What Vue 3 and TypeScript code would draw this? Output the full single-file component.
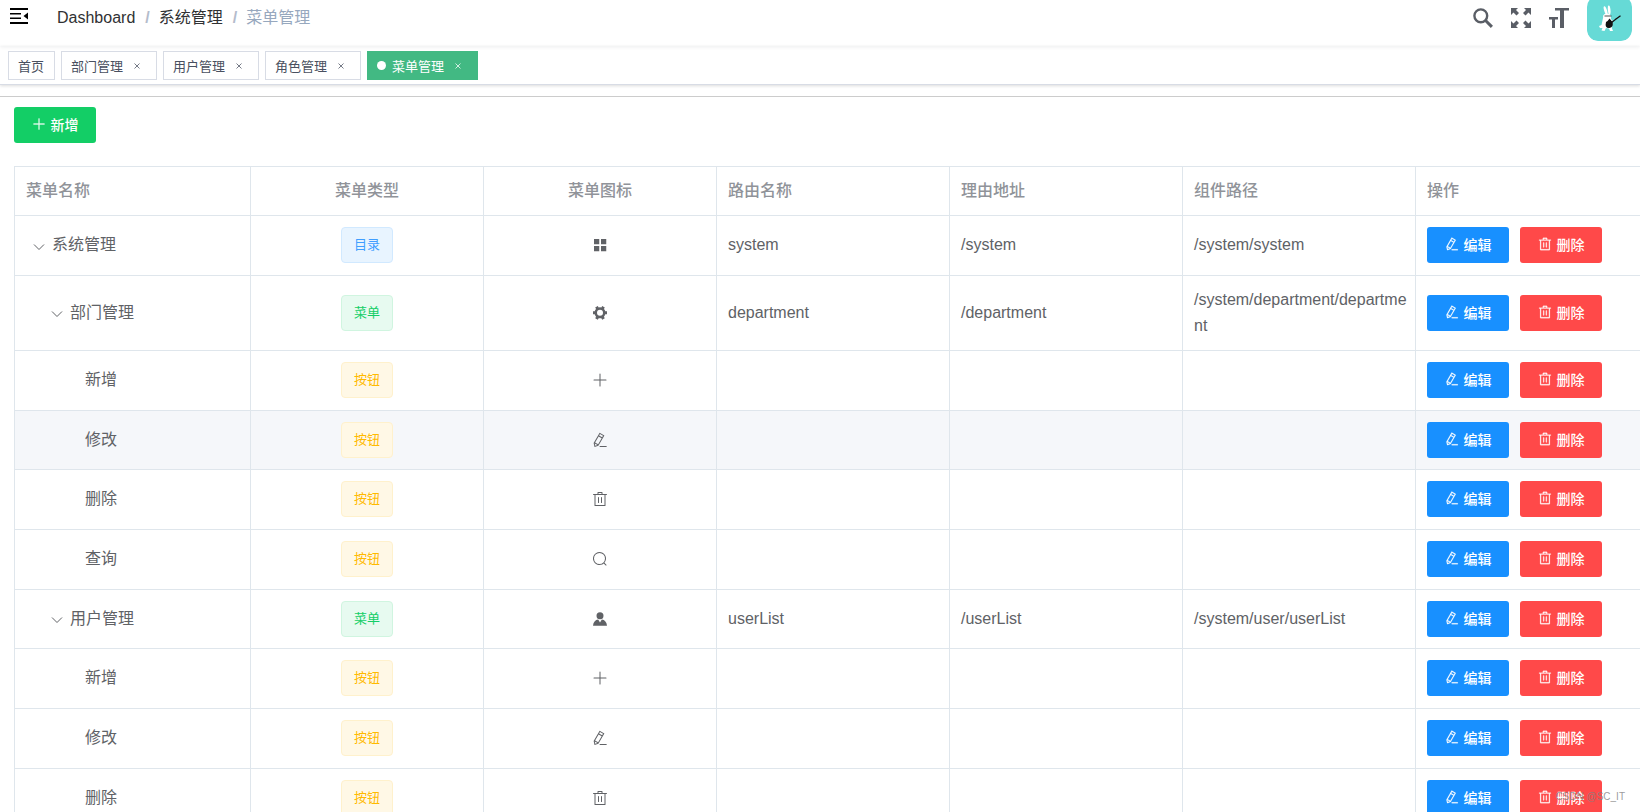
<script setup lang="ts">
import { ref } from 'vue'

type Kind = 'dir' | 'menu' | 'button'
type IconName = 'grid' | 'gear' | 'plus' | 'edit' | 'trash' | 'search' | 'user'

interface MenuRow {
  id: number
  name: string
  level: number
  kind: Kind
  icon: IconName
  route?: string
  url?: string
  path?: string
}

const kindLabel: Record<Kind, string> = { dir: '目录', menu: '菜单', button: '按钮' }

const icons: Record<IconName, string> = {
  grid: 'M128 128h336v336H128zM576 128h336v336H576zM128 576h336v336H128zM576 576h336v336H576z',
  gear: 'M764.416 254.72a351.68 351.68 0 0 1 86.336 149.184H960v192.064H850.752a351.68 351.68 0 0 1-86.336 149.312l54.72 94.72-166.272 96-54.592-94.72a352.64 352.64 0 0 1-172.48 0L371.136 936l-166.272-96 54.72-94.72a351.68 351.68 0 0 1-86.336-149.312H64v-192h109.248a351.68 351.68 0 0 1 86.336-149.312L204.8 160l166.208-96h.192l54.656 94.592a352.64 352.64 0 0 1 172.48 0L652.8 64h.128L819.2 160l-54.72 94.72zM704 499.968a192 192 0 1 0-384 0 192 192 0 0 0 384 0z',
  plus: 'M480 480V128a32 32 0 0 1 64 0v352h352a32 32 0 1 1 0 64H544v352a32 32 0 1 1-64 0V544H128a32 32 0 0 1 0-64h352z',
  edit: 'm199.04 672.64 193.984 112 224-387.968-193.92-112-224 388.032zm-23.872 60.16 32.896 148.288 144.896-45.696L175.168 732.8zM455.04 229.248l193.92 112 56.704-98.112-193.984-112-56.64 98.112zM104.32 708.8l384-665.024 304.768 175.936L409.152 884.8h.064l-248.448 78.336L104.32 708.8zm384 254.272v-64h448v64h-448z',
  trash: 'M160 256H96a32 32 0 0 1 0-64h256V95.936a32 32 0 0 1 32-32h256a32 32 0 0 1 32 32V192h256a32 32 0 1 1 0 64h-64v672a32 32 0 0 1-32 32H192a32 32 0 0 1-32-32V256zm448-64v-64H416v64h192zM224 896h576V256H224v640zm192-128a32 32 0 0 1-32-32V416a32 32 0 0 1 64 0v320a32 32 0 0 1-32 32zm192 0a32 32 0 0 1-32-32V416a32 32 0 0 1 64 0v320a32 32 0 0 1-32 32z',
  search: 'm795.904 750.72 124.992 124.928a32 32 0 0 1-45.248 45.248L750.656 795.904a416 416 0 1 1 45.248-45.248zM480 832a352 352 0 1 0 0-704 352 352 0 0 0 0 704z',
  user: 'M288 304a224 224 0 1 0 448 0 224 224 0 1 0-448 0zM628 540c190 20 316 166 332 404H64c16-238 142-384 332-404l116 190z',
}

const tabs = ref([
  { title: '首页', closable: false },
  { title: '部门管理', closable: true },
  { title: '用户管理', closable: true },
  { title: '角色管理', closable: true },
  { title: '菜单管理', closable: true },
])
const activeTab = ref('菜单管理')
const highlighted = ref(4)

const rows = ref<MenuRow[]>([
  { id: 1, name: '系统管理', level: 0, kind: 'dir', icon: 'grid', route: 'system', url: '/system', path: '/system/system' },
  { id: 2, name: '部门管理', level: 1, kind: 'menu', icon: 'gear', route: 'department', url: '/department', path: '/system/department/department' },
  { id: 3, name: '新增', level: 2, kind: 'button', icon: 'plus' },
  { id: 4, name: '修改', level: 2, kind: 'button', icon: 'edit' },
  { id: 5, name: '删除', level: 2, kind: 'button', icon: 'trash' },
  { id: 6, name: '查询', level: 2, kind: 'button', icon: 'search' },
  { id: 7, name: '用户管理', level: 1, kind: 'menu', icon: 'user', route: 'userList', url: '/userList', path: '/system/user/userList' },
  { id: 8, name: '新增', level: 2, kind: 'button', icon: 'plus' },
  { id: 9, name: '修改', level: 2, kind: 'button', icon: 'edit' },
  { id: 10, name: '删除', level: 2, kind: 'button', icon: 'trash' },
])
</script>

<template>
  <div class="page">
    <header class="navbar">
      <button class="bare" type="button" aria-label="收起菜单">
        <svg class="fold" viewBox="0 0 18 16">
          <path d="M0 0h18v2H0zM0 5h11v1.500H0zM0 9.500h11V11H0zM0 14h18v2H0zM18 4.500v7L13.500 8z" />
        </svg>
      </button>
      <nav class="crumbs" aria-label="面包屑">
        <a href="#">Dashboard</a>
        <span class="slash">/</span>
        <a href="#">系统管理</a>
        <span class="slash">/</span>
        <span class="here">菜单管理</span>
      </nav>
      <div class="tools">
        <button class="bare" type="button" aria-label="搜索">
          <svg class="tool" viewBox="0 0 20 20">
            <circle cx="7.800" cy="7.800" r="6.400" fill="none" stroke="currentColor" stroke-width="2.400" />
            <path d="M12.300 12.300l6.600 6.600" stroke="currentColor" stroke-width="3" />
          </svg>
        </button>
        <button class="bare" type="button" aria-label="全屏">
          <svg class="tool" viewBox="0 0 20 20">
            <path d="M0 0h7L5 2l3 3-2.500 2.500-3-3L0 7zM20 0h-7l2 2-3 3 2.500 2.500 3-3L20 7zM0 20h7l-2-2 3-3-2.500-2.500-3 3L0 13zM20 20h-7l2-2-3-3 2.500-2.500 3 3L20 13z" />
          </svg>
        </button>
        <button class="bare" type="button" aria-label="字号">
          <svg class="tool" viewBox="0 0 20 20">
            <path d="M6 0h14v2.500h-5V20h-4V2.500H6zM0 9h9v2.500H6V20H3v-8.500H0z" />
          </svg>
        </button>
        <button class="bare avatar" type="button" aria-label="用户">
          <svg viewBox="0 0 45 45">
            <rect width="45" height="45" fill="#66dad6" />
            <g fill="#fff">
              <ellipse cx="18.600" cy="14.500" rx="1.400" ry="4.500" transform="rotate(-18 18.600 14.500)" />
              <ellipse cx="22.200" cy="14" rx="1.300" ry="4.500" transform="rotate(-6 22.200 14)" />
              <ellipse cx="20" cy="21" rx="4" ry="3.600" />
              <path d="M16 22l-1.500 7-2.500 1 1 2 2.500 0-1 2.500 3 .500 1.500-3 3 .500 1 2.500h3l-1-2.500 .500-8-3-3z" />
            </g>
            <path d="M17.500 20h7" stroke="#222" stroke-width=".8" />
            <path d="M19 26q2-1 3.500-3.500l3 3.500q1.500 5-3 6-5 .500-3.500-6z" fill="#111" />
            <path d="M24 27l5-4M28 23.800l5.500-4" stroke="#111" stroke-width="1.300" />
          </svg>
        </button>
      </div>
    </header>

    <nav class="tabs" aria-label="标签页">
      <div v-for="tab in tabs" :key="tab.title" class="tab" :class="{ active: tab.title === activeTab }">
        <a href="#" @click.prevent="activeTab = tab.title">{{ tab.title }}</a>
        <button v-if="tab.closable" class="bare close" type="button" :aria-label="'关闭' + tab.title">
          <svg viewBox="0 0 6 6"><path d="M.500 .500l5 5M5.500 .500l-5 5" stroke="currentColor" /></svg>
        </button>
      </div>
    </nav>

    <main class="content">
      <button class="btn add" type="button">
        <svg class="glyph" viewBox="0 0 1024 1024"><path :d="icons.plus" /></svg>
        <span>新增</span>
      </button>

      <table class="grid">
        <colgroup>
          <col class="name-col" />
          <col span="6" />
        </colgroup>
        <thead>
          <tr>
            <th>菜单名称</th>
            <th class="center">菜单类型</th>
            <th class="center">菜单图标</th>
            <th>路由名称</th>
            <th>理由地址</th>
            <th>组件路径</th>
            <th>操作</th>
          </tr>
        </thead>
        <tbody>
          <tr v-for="row in rows" :key="row.id" :class="{ hover: row.id === highlighted }">
            <td>
              <div class="tree" :class="'level-' + row.level">
                <button v-if="row.level < 2" class="bare expand" type="button" :aria-label="'折叠' + row.name">
                  <svg viewBox="0 0 12 12"><path d="M1 3.500l5 5 5-5" fill="none" stroke="currentColor" /></svg>
                </button>
                <span>{{ row.name }}</span>
              </div>
            </td>
            <td class="center"><span class="tag" :class="row.kind">{{ kindLabel[row.kind] }}</span></td>
            <td class="center">
              <svg class="row-icon" viewBox="0 0 1024 1024"><path :d="icons[row.icon]" fill-rule="evenodd" /></svg>
            </td>
            <td>{{ row.route }}</td>
            <td>{{ row.url }}</td>
            <td>{{ row.path }}</td>
            <td>
              <div class="actions">
                <button class="btn edit" type="button">
                  <svg class="glyph" viewBox="0 0 1024 1024"><path :d="icons.edit" fill-rule="evenodd" /></svg>
                  <span>编辑</span>
                </button>
                <button class="btn remove" type="button">
                  <svg class="glyph" viewBox="0 0 1024 1024"><path :d="icons.trash" fill-rule="evenodd" /></svg>
                  <span>删除</span>
                </button>
              </div>
            </td>
          </tr>
        </tbody>
      </table>
    </main>
    <div class="credit">CSDN @SC_IT</div>
  </div>
</template>

<style>
html,
body {
  height: 100%;
  overflow: hidden;
}
#app {
  height: 100%;
}
</style>

<style scoped>
.page {
  position: relative;
  height: 100%;
  overflow: hidden;
  background: #fff;
  color: #606266;
  font-family: "Liberation Sans", "Noto Sans CJK SC", sans-serif;
  font-size: 16px;
}
.bare {
  display: flex;
  align-items: center;
  justify-content: center;
  padding: 0;
  border: 0;
  background: none;
  color: inherit;
  font: inherit;
  cursor: pointer;
}
svg {
  display: block;
  fill: currentColor;
}
.navbar {
  display: flex;
  align-items: flex-start;
  height: 46px;
  padding: 0 8px 0 10px;
  box-sizing: border-box;
  box-shadow: 0 1px 4px rgba(0, 21, 41, 0.08);
}
.fold {
  width: 18px;
  height: 16px;
  margin-top: 8px;
  color: #000;
}
.crumbs {
  display: flex;
  margin-left: 29px;
  line-height: 36px;
}
.crumbs a {
  color: #303133;
  text-decoration: none;
}
.slash {
  margin: 0 9px 0 10px;
  color: #b4bccc;
  font-weight: 700;
}
.here {
  color: #97a8be;
}
.tools {
  display: flex;
  align-items: flex-start;
  gap: 18px;
  margin-left: auto;
  color: #5a5e66;
}
.tool {
  width: 20px;
  height: 20px;
  margin-top: 8px;
}
.avatar {
  width: 45px;
  height: 41px;
  overflow: hidden;
  align-items: flex-end;
  border-radius: 0 0 11px 11px;
}
.avatar svg {
  flex: none;
  width: 45px;
  height: 45px;
  border-radius: 11px;
}
.tabs {
  display: flex;
  gap: 6px;
  height: 39px;
  padding: 5px 8px 0;
  box-sizing: border-box;
  border-bottom: 1px solid #d8dce5;
  box-shadow: 0 1px 3px rgba(0, 0, 0, 0.14);
}
.tab {
  display: flex;
  align-items: center;
  height: 29px;
  padding: 0 10px 0 9px;
  box-sizing: border-box;
  border: 1px solid #d8dce5;
  color: #495060;
  font-size: 13px;
}
.tab a {
  color: inherit;
  text-decoration: none;
}
.tab.active {
  border-color: #42b983;
  background: #42b983;
  color: #fff;
}
.tab.active::before {
  width: 9px;
  height: 9px;
  margin-right: 6px;
  border-radius: 50%;
  background: #fff;
  content: "";
}
.close {
  width: 18px;
  height: 18px;
  margin-left: 5px;
}
.close svg {
  width: 6px;
  height: 6px;
  opacity: 0.75;
}
.content {
  margin-top: 11px;
  padding: 10px 0 0 14px;
  overflow: hidden;
  border-top: 1px solid #ccc;
}
.btn {
  display: flex;
  align-items: center;
  justify-content: center;
  gap: 5px;
  width: 82px;
  height: 36px;
  padding: 0 0 2px;
  border: 0;
  border-radius: 3px;
  color: #fff;
  font: 500 14px "Noto Sans CJK SC", sans-serif;
  line-height: 20px;
  cursor: pointer;
}
.glyph {
  width: 14px;
  height: 14px;
  stroke: currentColor;
  stroke-width: 16px;
}
.add {
  background: #13ce66;
}
.edit {
  background: #1890ff;
}
.remove {
  background: #ff4949;
}
.grid {
  width: calc(100% + 9px);
  margin-top: 23px;
  table-layout: fixed;
  border-spacing: 0;
  border-top: 1px solid #dfe6ec;
  border-left: 1px solid #dfe6ec;
}
.name-col {
  width: 236px;
}
th,
td {
  height: 60px;
  padding: 0 8px 1px 11px;
  box-sizing: border-box;
  border-right: 1px solid #dfe6ec;
  border-bottom: 1px solid #dfe6ec;
  line-height: 26px;
  text-align: left;
  overflow-wrap: anywhere;
}
th {
  height: 49px;
  padding-bottom: 0;
  color: #909399;
  font-weight: 500;
}
tbody tr:nth-child(2) td {
  height: 75px;
}
tbody tr:nth-child(3n + 4) td {
  height: 59px;
}
.hover td {
  background: #f5f7fa;
}
.center {
  padding-right: 11px;
  text-align: center;
}
.tree {
  display: flex;
  align-items: center;
}
.level-0 {
  padding-left: 7px;
}
.level-1 {
  padding-left: 25px;
}
.level-2 {
  padding-left: 59px;
}
.expand {
  width: 12px;
  height: 12px;
  margin: 3px 7px 0 0;
}
.expand svg {
  width: 12px;
  height: 12px;
}
.tag {
  display: inline-block;
  height: 36px;
  padding: 0 12px;
  box-sizing: border-box;
  border: 1px solid;
  border-radius: 4px;
  font-size: 13px;
  line-height: 34px;
  vertical-align: middle;
}
.dir {
  border-color: #d1e9ff;
  background: #e8f4ff;
  color: #409eff;
}
.menu {
  border-color: #d0f5e0;
  background: #e7faf0;
  color: #13ce66;
}
.button {
  border-color: #fff1cc;
  background: #fff8e6;
  color: #ffba00;
}
.row-icon {
  width: 16px;
  height: 16px;
  margin: 0 auto;
}
.actions {
  display: flex;
  gap: 11px;
}
.credit {
  position: absolute;
  right: 15px;
  bottom: 8px;
  color: rgba(130, 130, 130, 0.8);
  font-size: 10px;
  line-height: 14px;
  pointer-events: none;
}
</style>
